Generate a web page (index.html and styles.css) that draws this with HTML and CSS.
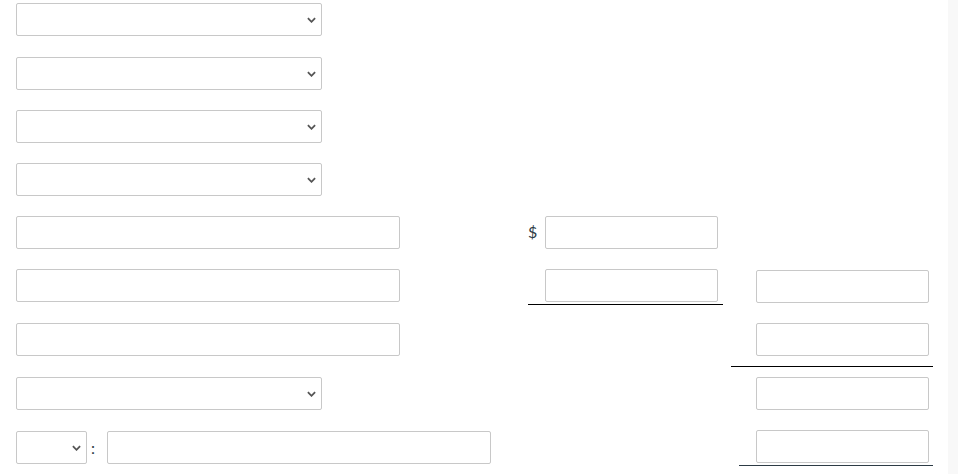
FILE: index.html
```html
<!DOCTYPE html>
<html lang="en">
<head>
  <meta charset="UTF-8" />
  <meta name="viewport" content="width=device-width, initial-scale=1.0" />
  <title>Statement Worksheet</title>
  <link rel="stylesheet" href="styles.css">
</head>
<body>
  <div class="page">
    <main class="sheet">

      <!-- row 1-4: account pickers -->
      <div class="cell label-col">
        <span class="pick wide-pick">
          <select><option></option></select>
          <svg class="chevron" viewBox="0 0 10 6"><path d="M1 1l4 4 4-4" /></svg>
        </span>
      </div>
      <div class="cell"></div>
      <div class="cell"></div>

      <div class="cell label-col">
        <span class="pick wide-pick">
          <select><option></option></select>
          <svg class="chevron" viewBox="0 0 10 6"><path d="M1 1l4 4 4-4" /></svg>
        </span>
      </div>
      <div class="cell"></div>
      <div class="cell"></div>

      <div class="cell label-col">
        <span class="pick wide-pick">
          <select><option></option></select>
          <svg class="chevron" viewBox="0 0 10 6"><path d="M1 1l4 4 4-4" /></svg>
        </span>
      </div>
      <div class="cell"></div>
      <div class="cell"></div>

      <div class="cell label-col">
        <span class="pick wide-pick">
          <select><option></option></select>
          <svg class="chevron" viewBox="0 0 10 6"><path d="M1 1l4 4 4-4" /></svg>
        </span>
      </div>
      <div class="cell"></div>
      <div class="cell"></div>

      <!-- row 5 -->
      <div class="cell label-col"><input class="text-field" type="text" /></div>
      <div class="cell amount">
        <span class="currency">$</span>
        <input class="num-field" type="text" />
      </div>
      <div class="cell"></div>

      <!-- row 6 -->
      <div class="cell label-col"><input class="text-field" type="text" /></div>
      <div class="cell amount subtotal">
        <span class="currency"></span>
        <input class="num-field" type="text" />
      </div>
      <div class="cell total-col nudge-down"><input class="num-field" type="text" /></div>

      <!-- row 7 -->
      <div class="cell label-col"><input class="text-field" type="text" /></div>
      <div class="cell"></div>
      <div class="cell total-col ruled"><input class="num-field" type="text" /></div>

      <!-- row 8 -->
      <div class="cell label-col">
        <span class="pick wide-pick">
          <select><option></option></select>
          <svg class="chevron" viewBox="0 0 10 6"><path d="M1 1l4 4 4-4" /></svg>
        </span>
      </div>
      <div class="cell"></div>
      <div class="cell total-col"><input class="num-field" type="text" /></div>

      <!-- row 9 -->
      <div class="cell label-col ratio-row">
        <span class="pick small-pick">
          <select><option></option></select>
          <svg class="chevron" viewBox="0 0 10 6"><path d="M1 1l4 4 4-4" /></svg>
        </span>
        <span class="colon">:</span>
        <input class="text-field" type="text" />
      </div>
      <div class="cell"></div>
      <div class="cell total-col final">
        <div class="final-line"><input class="num-field" type="text" /></div>
      </div>

    </main>
    <div class="scroll-track"></div>
  </div>
</body>
</html>
```

FILE: styles.css
```css
body {
  font-family: 'Lato', 'Liberation Sans', sans-serif;
  font-size: 16px;
  color: #2d3b45;
  background-color: #fff;
  margin: 0;
}

.page {
  display: flex;
  height: 100vh;
  overflow: hidden;
}

.sheet {
  flex: 1;
  display: grid;
  grid-template-columns: 512px 203px 202px;
  grid-template-rows: 54px 53px 53px 53px 53px 54px 54px 53px 44px;
  align-content: start;
  padding: 3px 0 0 16px;
}

.scroll-track {
  width: 10px;
  background-color: #f8f8f8;
}

.cell {
  display: flex;
  align-items: flex-start;
}

input,
select {
  box-sizing: border-box;
  height: 33px;
  margin: 0;
  border: 1px solid #c8c8c8;
  border-radius: 2px;
  background-color: #fff;
  font: inherit;
  color: inherit;
}

.text-field {
  width: 384px;
}

.num-field {
  width: 173px;
}

/* select with a drawn chevron */
.pick {
  position: relative;
  display: inline-block;
}

.pick select {
  appearance: none;
  -webkit-appearance: none;
  width: 100%;
  display: block;
}

.wide-pick {
  width: 306px;
}

.small-pick {
  width: 71px;
}

.chevron {
  position: absolute;
  right: 6px;
  top: 14px;
  width: 9px;
  height: 6px;
  fill: none;
  stroke: #555;
  stroke-width: 2;
  pointer-events: none;
}

.amount {
  width: 195px;
}

.currency {
  width: 17px;
  line-height: 31px;
}

.subtotal {
  height: 36px;
  box-sizing: border-box;
  padding-bottom: 2px;
  border-bottom: 1px solid #000;
}

.total-col {
  padding-left: 25px;
}

.nudge-down {
  padding-top: 1px;
}

.ruled {
  box-sizing: border-box;
  height: 44px;
  padding-bottom: 10px;
  border-bottom: 1px solid #000;
}

.ratio-row {
  padding-top: 1px;
}

.colon {
  line-height: 33px;
  margin: 0 12px 0 4px;
}

.total-col.final {
  padding-left: 8px;
}

.final-line {
  width: 194px;
  padding-left: 17px;
  padding-bottom: 2px;
  box-sizing: border-box;
  border-bottom: 1px solid #2d3b45;
}
```
